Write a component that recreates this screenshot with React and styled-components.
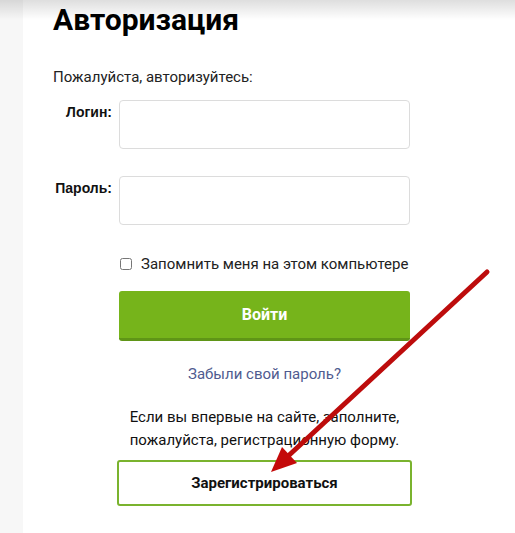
import React from "react";
import styled, { createGlobalStyle } from "styled-components";

const GlobalStyle = createGlobalStyle`
  html, body {
    margin: 0;
    padding: 0;
    background: #fff;
  }
  body {
    font-family: Roboto, "Liberation Sans", Arial, sans-serif;
    color: #111;
  }
`;

const App = () => {
  return (
    <>
      <GlobalStyle />
      <Page>
        <Sidebar />
        <Main>
          <Title>Авторизация</Title>
          <Intro>Пожалуйста, авторизуйтесь:</Intro>
          <Form onSubmit={(e) => e.preventDefault()}>
            <Row>
              <Label htmlFor="login">Логин:</Label>
              <Input id="login" type="text" />
            </Row>
            <Row>
              <Label htmlFor="pass">Пароль:</Label>
              <Input id="pass" type="password" />
            </Row>
            <Column>
              <Remember>
                <Check type="checkbox" />
                Запомнить меня на этом компьютере
              </Remember>
              <SubmitBtn type="submit">Войти</SubmitBtn>
              <Forgot href="#">Забыли свой пароль?</Forgot>
              <Note>
                Если вы впервые на сайте, заполните,
                <br />
                пожалуйста, регистрационную форму.
              </Note>
              <RegisterBtn type="button">Зарегистрироваться</RegisterBtn>
            </Column>
          </Form>
        </Main>
        <Arrow viewBox="0 0 515 533" aria-hidden="true">
          <line x1="487" y1="272" x2="286" y2="458" stroke="#bd0c0c" strokeWidth="5" strokeLinecap="round" />
          <polygon points="271,472 282,447 297,463" fill="#c40a0a" />
        </Arrow>
      </Page>
    </>
  );
};

const Page = styled.div`
  position: relative;
  display: flex;
  min-height: 533px;
  overflow: hidden;

  &::before {
    content: "";
    position: absolute;
    top: 0;
    left: 0;
    right: 0;
    height: 20px;
    background: linear-gradient(to bottom, rgba(0, 0, 0, 0.13), rgba(0, 0, 0, 0));
    pointer-events: none;
    z-index: 2;
  }
`;

const Sidebar = styled.div`
  width: 23px;
  flex-shrink: 0;
  background: #f7f7f7;
`;

const Main = styled.div`
  flex: 1;
  padding: 2px 0 0 30px;
`;

const Title = styled.h1`
  margin: 0;
  font-family: Roboto, "Liberation Sans", sans-serif;
  font-size: 30px;
  font-weight: 700;
  line-height: 36px;
  color: #000;
`;

const Intro = styled.p`
  margin: 30px 0 0;
  font-size: 15px;
  line-height: 18px;
  color: #222;
`;

const Form = styled.form`
  margin-top: 14px;
  display: flex;
  flex-direction: column;
  gap: 27px;
`;

const Row = styled.div`
  display: flex;
  align-items: flex-start;
  gap: 7px;
`;

const Label = styled.label`
  width: 59px;
  text-align: right;
  padding-top: 4px;
  font-family: "Liberation Sans", Arial, sans-serif;
  font-size: 14px;
  font-weight: 700;
  color: #111;
`;

const Input = styled.input`
  box-sizing: border-box;
  width: 291px;
  height: 49px;
  border: 1px solid #dcdcdc;
  border-radius: 4px;
  padding: 0 10px;
  font-size: 15px;
  outline: none;
`;

const Column = styled.div`
  width: 291px;
  margin-left: 66px;
  margin-top: 3px;
  display: flex;
  flex-direction: column;
  align-items: center;
`;

const Remember = styled.label`
  align-self: flex-start;
  display: flex;
  align-items: center;
  gap: 9px;
  font-size: 15px;
  color: #222;
  line-height: 18px;
`;

const Check = styled.input`
  width: 12px;
  height: 12px;
  margin: 0 0 0 1px;
  accent-color: #999;
`;

const SubmitBtn = styled.button`
  box-sizing: border-box;
  margin-top: 18px;
  width: 291px;
  height: 50px;
  border: none;
  border-bottom: 3px solid #5f9517;
  border-radius: 3px;
  background: #76b41b;
  color: #fff;
  font-family: Roboto, "Liberation Sans", sans-serif;
  font-size: 16px;
  font-weight: 700;
  cursor: pointer;
`;

const Forgot = styled.a`
  margin-top: 24px;
  font-size: 15px;
  line-height: 18px;
  color: #4f5b8f;
  text-decoration: none;
`;

const Note = styled.p`
  margin: 23px 0 0;
  font-size: 15px;
  line-height: 23px;
  text-align: center;
  color: #111;
`;

const RegisterBtn = styled.button`
  box-sizing: border-box;
  margin-top: 8px;
  width: 295px;
  height: 46px;
  border: 2px solid #7ab32e;
  border-radius: 3px;
  background: #fff;
  color: #111;
  font-family: Roboto, "Liberation Sans", sans-serif;
  font-size: 15px;
  font-weight: 700;
  cursor: pointer;
`;

const Arrow = styled.svg`
  position: absolute;
  top: 0;
  left: 0;
  width: 515px;
  height: 533px;
  pointer-events: none;
  z-index: 3;
`;

export default App;
